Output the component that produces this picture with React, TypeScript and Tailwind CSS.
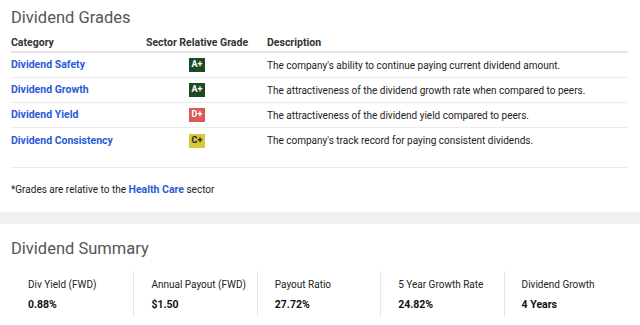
import React from "react";

const rows = [
  { cat: "Dividend Safety", grade: "A+", cls: "bg-[#1d4a1f] text-white", desc: "The company's ability to continue paying current dividend amount." },
  { cat: "Dividend Growth", grade: "A+", cls: "bg-[#1d4a1f] text-white", desc: "The attractiveness of the dividend growth rate when compared to peers." },
  { cat: "Dividend Yield", grade: "D+", cls: "bg-[#d95a57] text-white", desc: "The attractiveness of the dividend yield compared to peers." },
  { cat: "Dividend Consistency", grade: "C+", cls: "bg-[#d6c73c] text-[#222]", desc: "The company's track record for paying consistent dividends." },
];

const cards = [
  { label: "Div Yield (FWD)", value: "0.88%" },
  { label: "Annual Payout (FWD)", value: "$1.50" },
  { label: "Payout Ratio", value: "27.72%" },
  { label: "5 Year Growth Rate", value: "24.82%" },
  { label: "Dividend Growth", value: "4 Years" },
];

export default function App() {
  return (
    <div className="w-[640px] h-[325px] overflow-hidden bg-white text-[#222]" style={{ fontFamily: "Roboto, 'Liberation Sans', sans-serif" }}>
      <div className="px-[11px] pr-[12px]">
        <div className="pt-[6px] h-[34px] text-[16.5px] leading-[24px] text-[#555]">Dividend Grades</div>
        <div className="grid grid-cols-[129px_114px_1fr] h-[19px] items-center border-b-2 border-[#e5e5e5] text-[10.5px] font-bold text-[#333]">
          <div>Category</div>
          <div className="text-center">Sector Relative Grade</div>
          <div className="pl-[13px]">Description</div>
        </div>
        {rows.map((r, i) => (
          <div key={i} className={`grid grid-cols-[129px_114px_1fr] h-[25px] items-center ${i < 3 ? "border-b border-[#ececec]" : ""}`}>
            <div className="font-bold text-[10.5px] text-[#2a5bd7]">{r.cat}</div>
            <div className="flex justify-center">
              <span className={`w-[16px] h-[14px] flex items-center justify-center text-[9px] font-bold ${r.cls}`}>{r.grade}</span>
            </div>
            <div className="pl-[13px] text-[10px] text-[#222]">{r.desc}</div>
          </div>
        ))}
        <div className="h-[15px] border-b border-[#ececec]"></div>
        <div className="h-[44px] flex items-center text-[10px] text-[#222]">
          <span>*Grades are relative to the <span className="font-bold text-[10.5px] text-[#2a5bd7]">Health Care</span> sector</span>
        </div>
      </div>
      <div className="h-[12px] bg-[#f2f1ef]"></div>
      <div className="px-[11px]">
        <div className="pt-[13px] h-[47px] text-[16.5px] leading-[24px] text-[#555]">Dividend Summary</div>
        <div className="grid grid-cols-5 w-[617px]">
          {cards.map((c, i) => (
            <div key={i} className={`h-[46px] pl-[17px] flex flex-col justify-center gap-[7px] ${i < 4 ? "border-r border-[#e8e8e8]" : ""}`}>
              <div className="text-[10px] leading-[13px] text-[#222]">{c.label}</div>
              <div className="text-[10.5px] leading-[13px] font-bold text-[#111]">{c.value}</div>
            </div>
          ))}
        </div>
      </div>
    </div>
  );
}
